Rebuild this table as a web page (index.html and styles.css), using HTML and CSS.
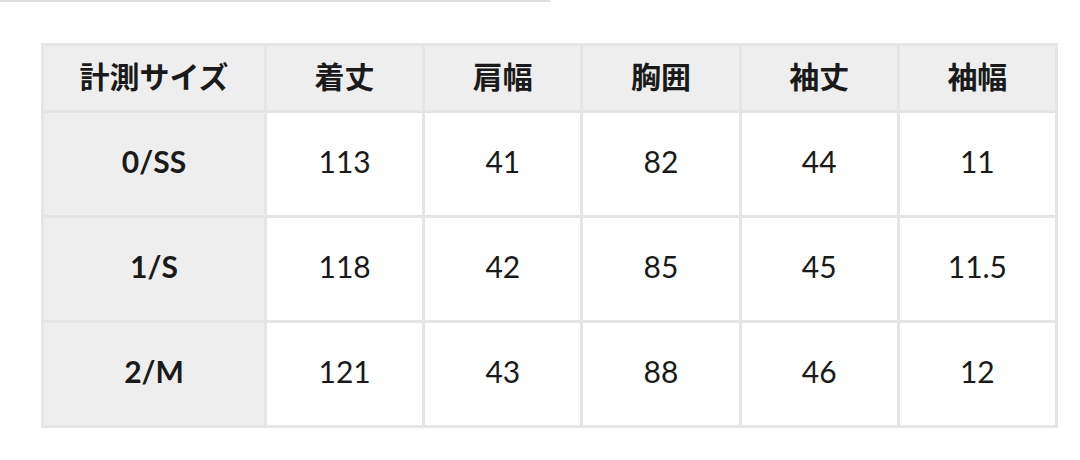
FILE: index.html
```html
<!DOCTYPE html>
<html lang="ja">
<head>
<meta charset="utf-8">
<link rel="stylesheet" href="styles.css">
</head>
<body>
<div class="topline"></div>
<table class="size-table">
  <thead>
    <tr>
      <th class="col-first">計測サイズ</th>
      <th>着丈</th>
      <th>肩幅</th>
      <th>胸囲</th>
      <th>袖丈</th>
      <th>袖幅</th>
    </tr>
  </thead>
  <tbody>
    <tr>
      <th class="rowhead">0/SS</th>
      <td>113</td><td>41</td><td>82</td><td>44</td><td>11</td>
    </tr>
    <tr>
      <th class="rowhead">1/S</th>
      <td>118</td><td>42</td><td>85</td><td>45</td><td>11.5</td>
    </tr>
    <tr>
      <th class="rowhead">2/M</th>
      <td>121</td><td>43</td><td>88</td><td>46</td><td>12</td>
    </tr>
  </tbody>
</table>
</body>
</html>
```

FILE: styles.css
```css
html, body {
  margin: 0;
  padding: 0;
  background: #ffffff;
}
body {
  width: 1080px;
  height: 460px;
  overflow: hidden;
  font-family: Lato, "Noto Sans CJK JP", sans-serif;
  color: #1a1a1a;
}
.topline {
  width: 550px;
  height: 2px;
  background: #dedede;
}
.size-table {
  margin: 41px 0 0 41px;
  border-collapse: collapse;
  table-layout: fixed;
  width: 1017px;
}
.size-table th,
.size-table td {
  border: 3px solid #e5e5e5;
  text-align: center;
  vertical-align: middle;
  padding: 0;
}
.size-table thead th {
  height: 57px;
  padding-bottom: 7px;
  background: #eeeeee;
  font-family: "Noto Sans CJK JP", sans-serif;
  font-weight: 700;
  font-size: 30px;
}
.size-table .col-first {
  width: 220px;
}
.size-table tbody th,
.size-table tbody td {
  height: 96px;
  padding-bottom: 6px;
  font-size: 30px;
}
.size-table .rowhead {
  background: #eeeeee;
  font-weight: 700;
}
.size-table td {
  font-weight: 400;
  background: #ffffff;
}
```
